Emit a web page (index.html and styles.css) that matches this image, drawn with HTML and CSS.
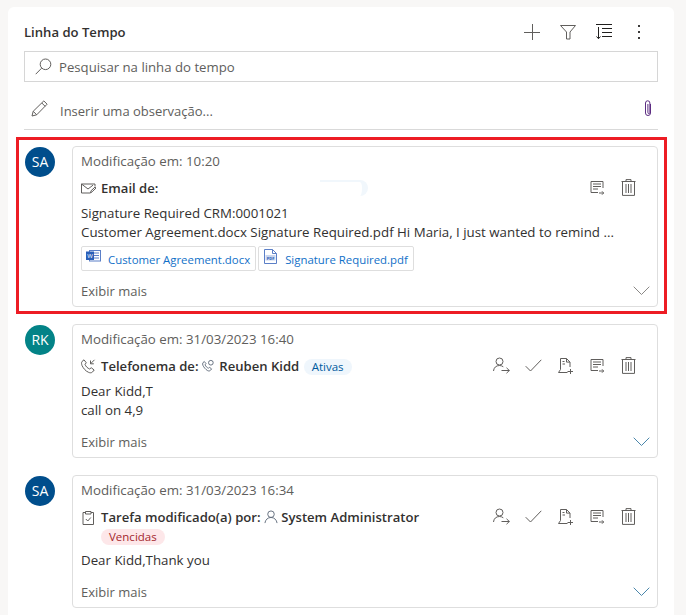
FILE: index.html

```html
<!DOCTYPE html>
<html lang="pt">
<head>
    <meta charset="UTF-8">
    <title>Linha do Tempo</title>
    <link rel="stylesheet" href="styles.css">
</head>
<body>

<svg class="sprites" width="0" height="0">
    <symbol id="ico-assign" viewBox="0 0 17 17"><g fill="none" stroke="currentColor"><circle cx="6.500" cy="4.500" r="3.500"/><path d="M.5 14c.3-3.400 2.600-5.500 6-5.500 1.500 0 2.800.5 3.800 1.300"/><path d="M8.500 13.500h8M13.500 10.800l2.800 2.700-2.800 2.700"/></g></symbol>
    <symbol id="ico-check" viewBox="0 0 17 17"><path d="M.7 9.200l4.800 4.800L16.300 2.800" fill="none" stroke="currentColor"/></symbol>
    <symbol id="ico-case" viewBox="0 0 17 17"><g fill="none" stroke="currentColor"><path d="M3.500 12.500V1.500h6l3.500 3.600V10"/><path d="M9.500 1.500v3.600H13"/><path d="M5.500 4.500H7.500M5.500 7H8"/><path d="M3.500 12.500L1.500 15.500h9"/><path d="M10.500 14.500h5.500M13.500 12v5"/></g></symbol>
    <symbol id="ico-note" viewBox="0 0 17 17"><g fill="none" stroke="currentColor"><path d="M9 13.500H2V2.500h12V9"/><path d="M4 5h8M4 7.500h8M4 10h5"/><path d="M10 14h4.500M13 12.300l1.700 1.700-1.700 1.700"/></g></symbol>
    <symbol id="ico-trash" viewBox="0 0 17 17"><g fill="none" stroke="currentColor"><path d="M.5 2.500h14M5 2.500V.6h5v1.900"/><path d="M1.500 2.500v13.900h12V2.500"/><path d="M5 5v9M7.500 5v9M10 5v9"/></g></symbol>
    <symbol id="ico-chevron" viewBox="0 0 17 10"><path d="M.7.7l7.800 7.800L16.300.7" fill="none" stroke="currentColor"/></symbol>
</svg>

<div class="painel">
    <div class="topo">
        <h1 class="tittel">Linha do Tempo</h1>
        <div class="topo-knapper">
            <svg class="ico-stor" viewBox="0 0 16 16"><path d="M8.500 0v16M0 8.500h16" fill="none" stroke="currentColor"/></svg>
            <svg class="ico-stor" viewBox="0 0 16 16"><path d="M.5 1.500h15l-5.500 6.500v7H6.500V8z" fill="none" stroke="currentColor"/></svg>
            <svg class="ico-stor ico-sorter" viewBox="0 0 16 16"><path d="M0 .5h16M6 4.500h10M6 8.500h10M6 12.500h10M2.500 3v11.500M.5 12.500l2 2.200 2-2.200" fill="none" stroke="currentColor"/></svg>
            <span class="prikker"><i></i><i></i><i></i></span>
        </div>
    </div>

    <div class="sok">
        <svg class="ico-sok" viewBox="0 0 17 17"><g fill="none" stroke="currentColor"><circle cx="10.500" cy="6.300" r="5.300"/><path d="M6.600 10.200L.7 16.200"/></g></svg>
        <span>Pesquisar na linha do tempo</span>
    </div>

    <div class="notat">
        <svg class="ico-blyant" viewBox="0 0 17 17"><g fill="none" stroke="currentColor"><path d="M1 16l1.200-4.700L12.800.9l3.300 3.300L5.700 14.800z"/><path d="M10.800 3l3.300 3.300M2.200 11.300l3.500 3.500"/></g></svg>
        <span class="notat-tekst">Inserir uma observação...</span>
        <svg class="ico-binders" viewBox="0 0 8 17"><path d="M6.500 4v9a2.500 2.500 0 0 1-5 0V3a2.200 2.200 0 0 1 4.400 0v9.500a1 1 0 0 1-2 0V4" fill="none" stroke="#5c2d82"/></svg>
    </div>

    <div class="innslag innslag-valgt">
        <div class="avatar avatar-bla">SA</div>
        <div class="kort">
            <div class="tid">Modificação em: 10:20</div>
            <div class="rad">
                <svg class="ico-type" viewBox="0 0 15 12"><g fill="none" stroke="currentColor"><path d="M9 10.500H.5V1.500h13.500V4"/><path d="M.5 1.500l6.500 5 5-3.800"/><path d="M9.500 10.500l.6-2.300 4-3.700 1 1-4 3.800z"/></g></svg>
                <div class="rad-tekst"><b>Email de:</b></div>
                <span class="rest-merke"></span>
                <div class="knapper">
                    <svg class="ico-lite"><use href="#ico-note"/></svg>
                    <svg class="ico-lite"><use href="#ico-trash"/></svg>
                </div>
            </div>
            <div class="tekst">
                <div>Signature Required CRM:0001021</div>
                <div>Customer Agreement.docx Signature Required.pdf Hi Maria, I just wanted to remind ...</div>
            </div>
            <div class="vedlegg">
                <a class="fil">
                    <svg class="ico-fil" viewBox="0 0 15 12"><rect x="3.500" y=".5" width="11" height="10.500" fill="#fff" stroke="#5b7fc7"/><path d="M8 3h5M8 5.500h5M8 8h5" stroke="#5b7fc7"/><rect y="1.500" width="8" height="8.500" fill="#2b5fb8"/><text x="4" y="8.300" class="fil-bokstav">W</text></svg>
                    Customer Agreement.docx
                </a>
                <a class="fil">
                    <svg class="ico-fil ico-pdf" viewBox="0 0 13 15"><path d="M.5.500h8l4 4v10H.5z" fill="#fff" stroke="#5b7fc7"/><path d="M8.500.5v4h4" fill="none" stroke="#5b7fc7"/><rect x="1.500" y="6" width="10" height="5.500" fill="#c9d6ef"/><text x="6.500" y="10.500" class="fil-pdf">PDF</text></svg>
                    Signature Required.pdf
                </a>
            </div>
            <div class="bunn">
                <span>Exibir mais</span>
                <svg class="ico-pil pil-gra"><use href="#ico-chevron"/></svg>
            </div>
        </div>
    </div>

    <div class="innslag">
        <div class="avatar avatar-gronn">RK</div>
        <div class="kort">
            <div class="tid">Modificação em: 31/03/2023 16:40</div>
            <div class="rad">
                <svg class="ico-type" viewBox="0 0 15 15"><g fill="none" stroke="currentColor"><path d="M1 2.500L3 .8l2.300 3-1.300 1.500c.8 2.200 2.500 3.900 4.700 4.700L10.200 8.700l3 2.300-1.700 2c-1 1-2.500 1-4 .3C4.500 12 2.500 9.500 1 6.500.5 5 .3 3.500 1 2.500z"/><path d="M13.500.8L9.500 4.800M9.500 1.500v3.300h3.300"/></g></svg>
                <div class="rad-tekst">
                    <b>Telefonema de:</b>
                    <svg class="ico-person" viewBox="0 0 15 15"><g fill="none" stroke="#5f6b7a"><path d="M1 4l1.500-1.300 1.800 2.300-1 1.200c.6 1.700 2 3 3.700 3.700l1-1 2.300 1.700-1.300 1.600c-.8.800-2 .8-3.100.2C3.700 11 2 9 1 6.800.6 5.800.5 4.800 1 4z"/><circle cx="9.500" cy="4" r="2.500"/></g></svg>
                    <b>Reuben Kidd</b>
                    <span class="merke merke-bla">Ativas</span>
                </div>
                <div class="knapper">
                    <svg class="ico-lite"><use href="#ico-assign"/></svg>
                    <svg class="ico-lite"><use href="#ico-check"/></svg>
                    <svg class="ico-lite"><use href="#ico-case"/></svg>
                    <svg class="ico-lite"><use href="#ico-note"/></svg>
                    <svg class="ico-lite"><use href="#ico-trash"/></svg>
                </div>
            </div>
            <div class="tekst">
                <div>Dear Kidd,T</div>
                <div>call on 4,9</div>
            </div>
            <div class="bunn">
                <span>Exibir mais</span>
                <svg class="ico-pil pil-bla"><use href="#ico-chevron"/></svg>
            </div>
        </div>
    </div>

    <div class="innslag">
        <div class="avatar avatar-bla">SA</div>
        <div class="kort">
            <div class="tid">Modificação em: 31/03/2023 16:34</div>
            <div class="rad">
                <svg class="ico-type" viewBox="0 0 15 15"><g fill="none" stroke="currentColor"><path d="M4.500 2.500H2v12h10.500v-12H10"/><path d="M4.500 1.500h5.500v2.500H4.500z"/><path d="M4.800 9l2 2 3-3.500"/></g></svg>
                <div class="rad-tekst">
                    <b>Tarefa modificado(a) por:</b>
                    <svg class="ico-person" viewBox="0 0 15 15"><g fill="none" stroke="#5f6b7a"><circle cx="7.500" cy="4.500" r="3.500"/><path d="M1 14c.4-3.500 3-6 6.500-6s6 2.500 6.500 6"/></g></svg>
                    <b>System Administrator</b>
                    <div class="merke-linje"><span class="merke merke-rod">Vencidas</span></div>
                </div>
                <div class="knapper">
                    <svg class="ico-lite"><use href="#ico-assign"/></svg>
                    <svg class="ico-lite"><use href="#ico-check"/></svg>
                    <svg class="ico-lite"><use href="#ico-case"/></svg>
                    <svg class="ico-lite"><use href="#ico-note"/></svg>
                    <svg class="ico-lite"><use href="#ico-trash"/></svg>
                </div>
            </div>
            <div class="tekst">
                <div>Dear Kidd,Thank you</div>
            </div>
            <div class="bunn">
                <span>Exibir mais</span>
                <svg class="ico-pil pil-bla"><use href="#ico-chevron"/></svg>
            </div>
        </div>
    </div>
</div>

</body>
</html>
```

FILE: styles.css

```css
html {
    background-color: #f8f7f6;
}
body {
    margin: 0;
    height: 615px;
    overflow: hidden;
    font-family: "Open Sans", "Noto Sans", sans-serif;
    font-size: 13px;
    color: #323130;
}
.sprites {
    position: absolute;
}
.painel {
    width: 634px;
    height: 608px;
    overflow: hidden;
    margin: 7px 0 0 8px;
    padding: 0 16px;
    background-color: white;
    border-radius: 6px 6px 0 0;
}
.topo {
    display: flex;
    align-items: center;
    justify-content: space-between;
    height: 44px;
    padding-top: 6px;
    box-sizing: border-box;
}
.tittel {
    margin: 0;
    font-size: 13.1px;
    font-weight: 600;
    color: #323130;
}
.topo-knapper {
    display: flex;
    align-items: center;
    gap: 20px;
    padding-right: 18px;
    color: #605e5c;
}
.ico-stor {
    width: 16px;
    height: 16px;
}
.ico-sorter {
    color: #201f1e;
}
.prikker {
    display: flex;
    flex-direction: column;
    gap: 4px;
    margin-left: 6px;
}
.prikker i {
    width: 2px;
    height: 2px;
    background-color: #3b3a39;
}
.sok {
    display: flex;
    align-items: center;
    gap: 7px;
    height: 31px;
    padding-left: 10px;
    box-sizing: border-box;
    border: 1px solid #d6d6d6;
    color: #605e5c;
    font-size: 13.2px;
}
.ico-sok {
    width: 17px;
    height: 17px;
}
.notat {
    display: flex;
    align-items: center;
    height: 48px;
    padding: 10px 6px 0 7px;
    box-sizing: border-box;
    border-bottom: 1px solid #d9d9d9;
    color: #605e5c;
}
.ico-blyant {
    width: 17px;
    height: 17px;
    margin-top: -5px;
}
.notat-tekst {
    flex: 1;
    margin-left: 12px;
}
.ico-binders {
    width: 8px;
    height: 17px;
    margin-top: -4px;
}
.innslag {
    display: flex;
    gap: 17px;
    margin: 1px -9px 1px -8px;
    padding: 6px 6px 4px 6px;
    border: 3px solid transparent;
}
.innslag-valgt {
    margin-top: 7px;
    border-color: #ed1c24;
}
.avatar {
    flex: none;
    width: 30px;
    height: 30px;
    margin-top: 1px;
    border-radius: 50%;
    color: white;
    font-size: 14px;
    line-height: 30px;
    text-align: center;
}
.avatar-bla {
    background-color: #004e8c;
}
.avatar-gronn {
    background-color: #038387;
}
.kort {
    flex: 1;
    min-width: 0;
    padding: 0 7px 2px 8px;
    border: 1px solid #dedede;
    border-radius: 4px;
}
.tid {
    height: 28px;
    line-height: 28px;
    color: #605e5c;
    font-size: 13.3px;
}
.rad {
    display: flex;
    align-items: flex-start;
}
.ico-type {
    flex: none;
    width: 15px;
    height: 15px;
    margin: 6px 5px 0 0;
    color: #605e5c;
}
.rad-tekst {
    flex: 1;
    line-height: 26px;
    min-height: 26px;
}
.rad-tekst b {
    font-weight: 600;
    font-size: 13.1px;
}
.rest-merke {
    position: absolute;
    left: 320px;
    top: 180px;
    width: 48px;
    height: 16px;
    box-sizing: border-box;
    border-top: 2px solid #f1f7fc;
    border-right: 6px solid #f1f7fc;
    border-radius: 0 8px 8px 0;
}
.ico-person {
    width: 14px;
    height: 14px;
    vertical-align: -2px;
}
.merke-linje {
    height: 16px;
    margin: -1px 0 3px;
}
.merke {
    display: inline-block;
    height: 16px;
    padding: 0 8px;
    border-radius: 8px;
    font-size: 11.5px;
    line-height: 16px;
    margin-left: 1px;
}
.merke-bla {
    background-color: #eff6fc;
    color: #005a9e;
}
.merke-rod {
    background-color: #fde7e9;
    color: #a4262c;
    margin-left: 0;
    vertical-align: top;
}
.knapper {
    display: flex;
    gap: 15px;
    padding: 4px 12px 0 0;
    color: #605e5c;
}
.ico-lite {
    width: 17px;
    height: 17px;
}
.tekst {
    margin: 3px 0 9px;
    line-height: 19px;
    white-space: nowrap;
    font-size: 13.3px;
}
.vedlegg {
    display: flex;
    gap: 2px;
    margin: -5px 0 7px;
}
.fil {
    display: flex;
    align-items: center;
    gap: 7px;
    height: 25px;
    padding: 1px 5px 0 4px;
    box-sizing: border-box;
    border: 1px solid #dedede;
    border-radius: 2px;
    font-size: 11.4px;
    color: #1170c8;
}
.ico-fil {
    width: 15px;
    height: 12px;
    margin-top: -6px;
}
.ico-pdf {
    height: 15px;
}
.fil-bokstav {
    font-size: 6px;
    fill: white;
    text-anchor: middle;
}
.fil-pdf {
    font-size: 4px;
    fill: #2b5fb8;
    font-weight: 700;
    text-anchor: middle;
}
.bunn {
    display: flex;
    align-items: center;
    justify-content: space-between;
    height: 26px;
    color: #605e5c;
}
.ico-pil {
    width: 17px;
    height: 10px;
}
.pil-gra {
    color: #8a8886;
}
.pil-bla {
    color: #4a86ab;
}
```
